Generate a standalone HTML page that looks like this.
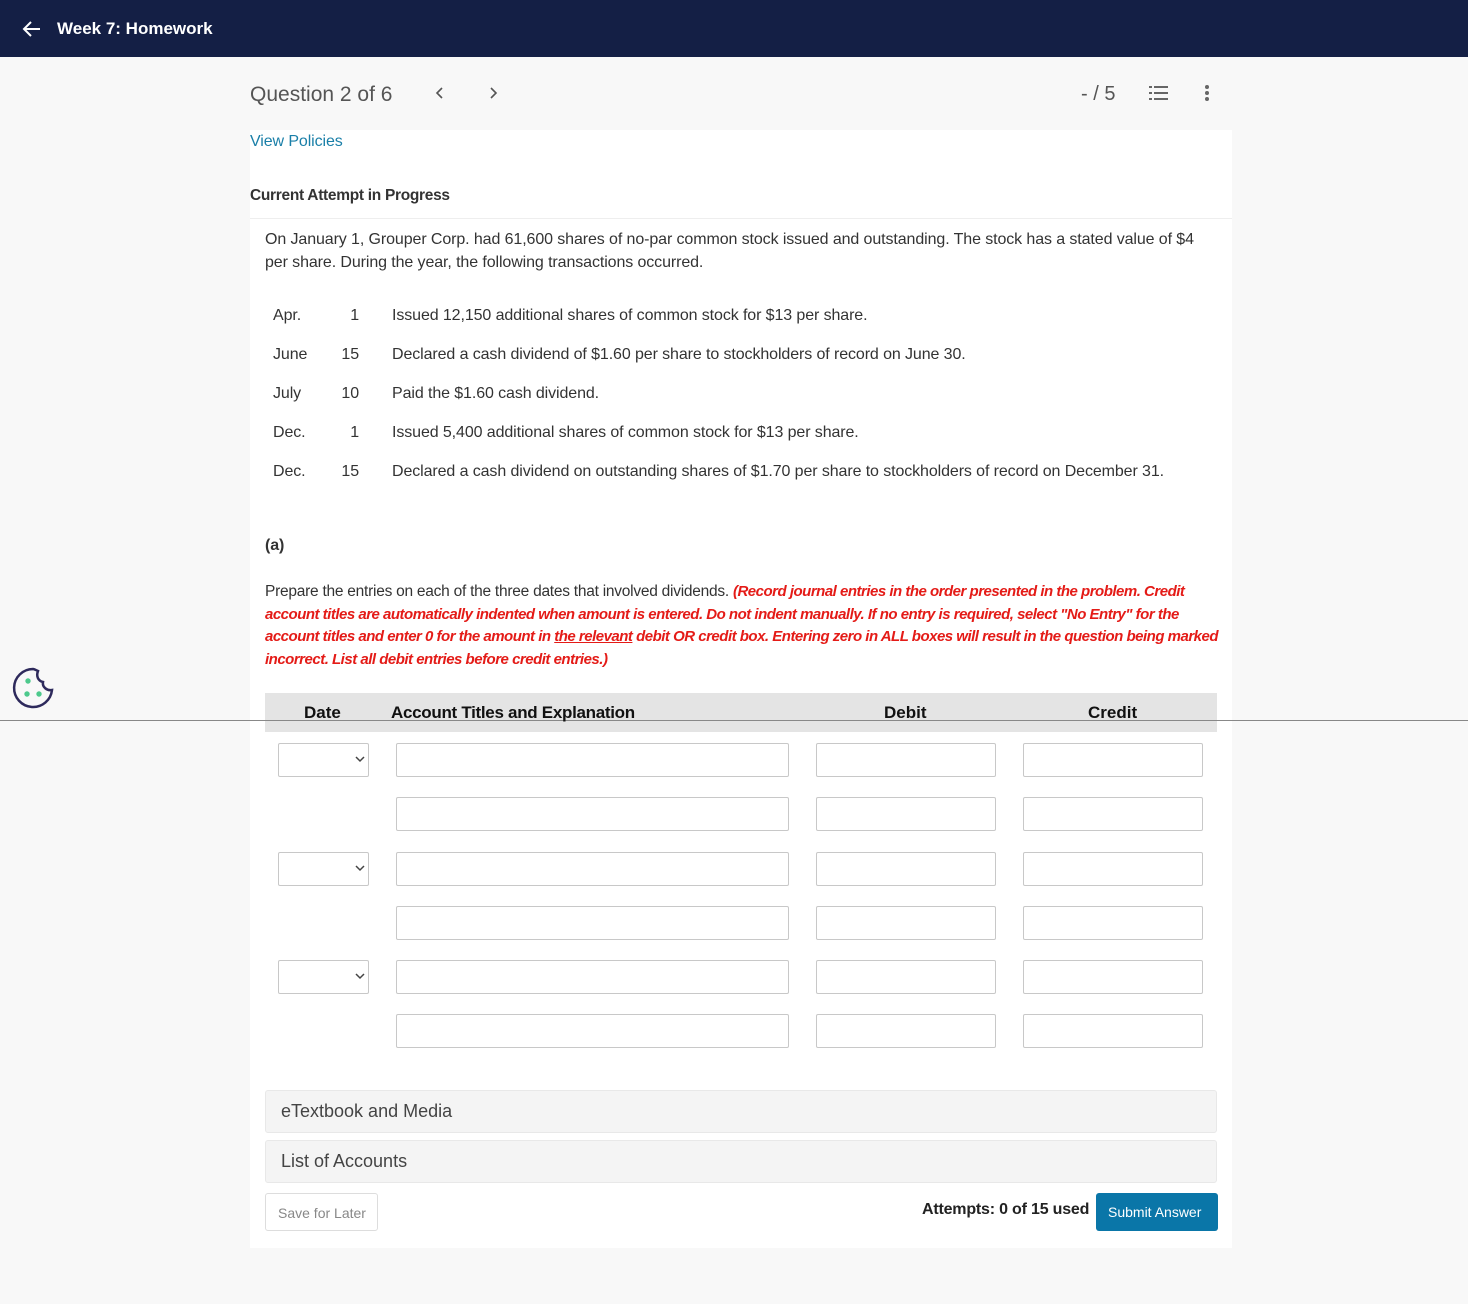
<!DOCTYPE html>
<html><head><meta charset="utf-8"><style>
*{box-sizing:border-box;margin:0;padding:0}
body{width:1468px;height:1304px;background:#f8f8f8;font-family:"Liberation Sans",sans-serif;color:#333;position:relative;overflow:hidden}
.hdr{position:absolute;left:0;top:0;width:1468px;height:57px;background:#141f45;color:#fff}
.hdr .t{position:absolute;left:57px;top:19px;font-size:17px;font-weight:bold}
.abs{position:absolute}
.panel{position:absolute;left:250px;top:130px;width:982px;height:1118px;background:#fff}
.txt{font-size:16px;letter-spacing:-0.1px;color:#333}
.red{color:#e41b17;font-style:italic;font-weight:bold;font-size:15px;letter-spacing:-0.5px}
.inp{position:absolute;height:34px;border:1px solid #c8c8c8;border-radius:2px;background:#fff}
.acc{position:absolute;left:265px;width:952px;height:43px;background:#f4f4f4;border:1px solid #e8e8e8;border-radius:3px;font-size:18px;color:#444;padding:10px 15px}
</style></head><body>
<div class="hdr">
<svg class="abs" style="left:22px;top:19px" width="20" height="20" viewBox="0 0 20 20"><path d="M18 10H3M9 3L2 10l7 7" stroke="#fff" stroke-width="2" fill="none"/></svg>
<div class="t">Week 7: Homework</div></div>
<div class="abs" style="left:250px;top:83px;font-size:21px;color:#555">Question 2 of 6</div>
<svg class="abs" style="left:434px;top:86px" width="12" height="14"><path d="M8 2L3 7l5 5" stroke="#555" stroke-width="1.6" fill="none"/></svg>
<svg class="abs" style="left:487px;top:86px" width="12" height="14"><path d="M4 2l5 5-5 5" stroke="#555" stroke-width="1.6" fill="none"/></svg>
<div class="abs" style="left:1081px;top:83px;font-size:20px;color:#555">- / 5</div>
<svg class="abs" style="left:1148px;top:84px" width="22" height="18"><g fill="#666"><rect x="6" y="2" width="14" height="2"/><rect x="6" y="8" width="14" height="2"/><rect x="6" y="14" width="14" height="2"/><rect x="1" y="2" width="3" height="2"/><rect x="1" y="8" width="3" height="2"/><rect x="1" y="14" width="3" height="2"/></g></svg>
<svg class="abs" style="left:1203px;top:84px" width="8" height="18"><g fill="#666"><circle cx="4" cy="3" r="2"/><circle cx="4" cy="9" r="2"/><circle cx="4" cy="15" r="2"/></g></svg>
<div class="panel"></div>
<div class="abs txt" style="left:250px;top:133px;color:#1a7fa8;font-size:16px">View Policies</div>
<div class="abs" style="left:250px;top:187px;font-size:15.5px;font-weight:bold;color:#333;letter-spacing:-0.3px">Current Attempt in Progress</div>
<div class="abs" style="left:250px;top:218px;width:982px;height:1px;background:#eee"></div>
<div class="abs txt" style="left:265px;top:229px;width:945px;line-height:22.5px">On January 1, Grouper Corp. had 61,600 shares of no-par common stock issued and outstanding. The stock has a stated value of $4 per share. During the year, the following transactions occurred.</div>
<div class="abs txt" style="left:273px;top:296px;line-height:39px">Apr.<br>June<br>July<br>Dec.<br>Dec.</div>
<div class="abs txt" style="left:339px;top:296px;line-height:39px;width:20px;text-align:right">1<br>15<br>10<br>1<br>15</div>
<div class="abs txt" style="left:392px;top:296px;line-height:39px;white-space:nowrap">Issued 12,150 additional shares of common stock for $13 per share.<br>Declared a cash dividend of $1.60 per share to stockholders of record on June 30.<br>Paid the $1.60 cash dividend.<br>Issued 5,400 additional shares of common stock for $13 per share.<br>Declared a cash dividend on outstanding shares of $1.70 per share to stockholders of record on December 31.</div>
<div class="abs txt" style="left:265px;top:537px;font-weight:bold">(a)</div>
<div class="abs txt" style="left:265px;top:581px;width:955px;line-height:22.7px;font-size:15.5px;letter-spacing:-0.25px">Prepare the entries on each of the three dates that involved dividends. <span class="red">(Record journal entries in the order presented in the problem. Credit account titles are automatically indented when amount is entered. Do not indent manually. If no entry is required, select "No Entry" for the account titles and enter 0 for the amount in <u>the relevant</u> debit OR credit box. Entering zero in ALL boxes will result in the question being marked incorrect. List all debit entries before credit entries.)</span></div>
<div class="abs" style="left:265px;top:693px;width:952px;height:39px;background:#e4e4e4"></div>
<div class="abs" style="left:0;top:720px;width:1468px;height:1px;background:#888"></div>
<div class="abs" style="left:304px;top:703px;font-size:17px;font-weight:bold;color:#111">Date</div>
<div class="abs" style="left:391px;top:703px;font-size:17px;font-weight:bold;color:#111;letter-spacing:-0.3px">Account Titles and Explanation</div>
<div class="abs" style="left:884px;top:703px;font-size:17px;font-weight:bold;color:#111">Debit</div>
<div class="abs" style="left:1088px;top:703px;font-size:17px;font-weight:bold;color:#111">Credit</div>
<svg class="abs" style="left:12px;top:667px" width="42" height="42" viewBox="0 0 42 42"><path d="M21 2A19 19 0 1 0 40 23C35 24 30 20 31 15C26 14 24 9 26 4C24 3 22 2 21 2Z" fill="none" stroke="#2e2a5c" stroke-width="2.5"/><g fill="#4dc98c"><circle cx="16" cy="14" r="2.7"/><circle cx="15" cy="27" r="2.7"/><circle cx="27" cy="27" r="2.7"/></g></svg>
<div class="inp" style="left:278px;top:743px;width:91px"></div>
<div class="inp" style="left:278px;top:852px;width:91px"></div>
<div class="inp" style="left:278px;top:960px;width:91px"></div>
<svg class="abs" style="left:355px;top:755px" width="10" height="8"><path d="M1 2l4 4 4-4" stroke="#444" stroke-width="1.5" fill="none"/></svg>
<svg class="abs" style="left:355px;top:864px" width="10" height="8"><path d="M1 2l4 4 4-4" stroke="#444" stroke-width="1.5" fill="none"/></svg>
<svg class="abs" style="left:355px;top:972px" width="10" height="8"><path d="M1 2l4 4 4-4" stroke="#444" stroke-width="1.5" fill="none"/></svg>
<div class="inp" style="left:396px;top:743px;width:393px"></div><div class="inp" style="left:816px;top:743px;width:180px"></div><div class="inp" style="left:1023px;top:743px;width:180px"></div>
<div class="inp" style="left:396px;top:797px;width:393px"></div><div class="inp" style="left:816px;top:797px;width:180px"></div><div class="inp" style="left:1023px;top:797px;width:180px"></div>
<div class="inp" style="left:396px;top:852px;width:393px"></div><div class="inp" style="left:816px;top:852px;width:180px"></div><div class="inp" style="left:1023px;top:852px;width:180px"></div>
<div class="inp" style="left:396px;top:906px;width:393px"></div><div class="inp" style="left:816px;top:906px;width:180px"></div><div class="inp" style="left:1023px;top:906px;width:180px"></div>
<div class="inp" style="left:396px;top:960px;width:393px"></div><div class="inp" style="left:816px;top:960px;width:180px"></div><div class="inp" style="left:1023px;top:960px;width:180px"></div>
<div class="inp" style="left:396px;top:1014px;width:393px"></div><div class="inp" style="left:816px;top:1014px;width:180px"></div><div class="inp" style="left:1023px;top:1014px;width:180px"></div>
<div class="acc" style="top:1090px">eTextbook and Media</div>
<div class="acc" style="top:1140px">List of Accounts</div>
<div class="abs" style="left:265px;top:1193px;width:113px;height:38px;border:1px solid #ddd;border-radius:3px;font-size:14px;color:#888;padding:11px 0 0 12px">Save for Later</div>
<div class="abs" style="left:922px;top:1201px;font-size:16px;color:#222;letter-spacing:-0.2px;font-weight:bold;font-weight:600">Attempts: 0 of 15 used</div>
<div class="abs" style="left:1096px;top:1193px;width:122px;height:38px;background:#0a76a8;border-radius:3px;color:#fff;font-size:14px;padding:11px 0 0 12px">Submit Answer</div>
</body></html>
